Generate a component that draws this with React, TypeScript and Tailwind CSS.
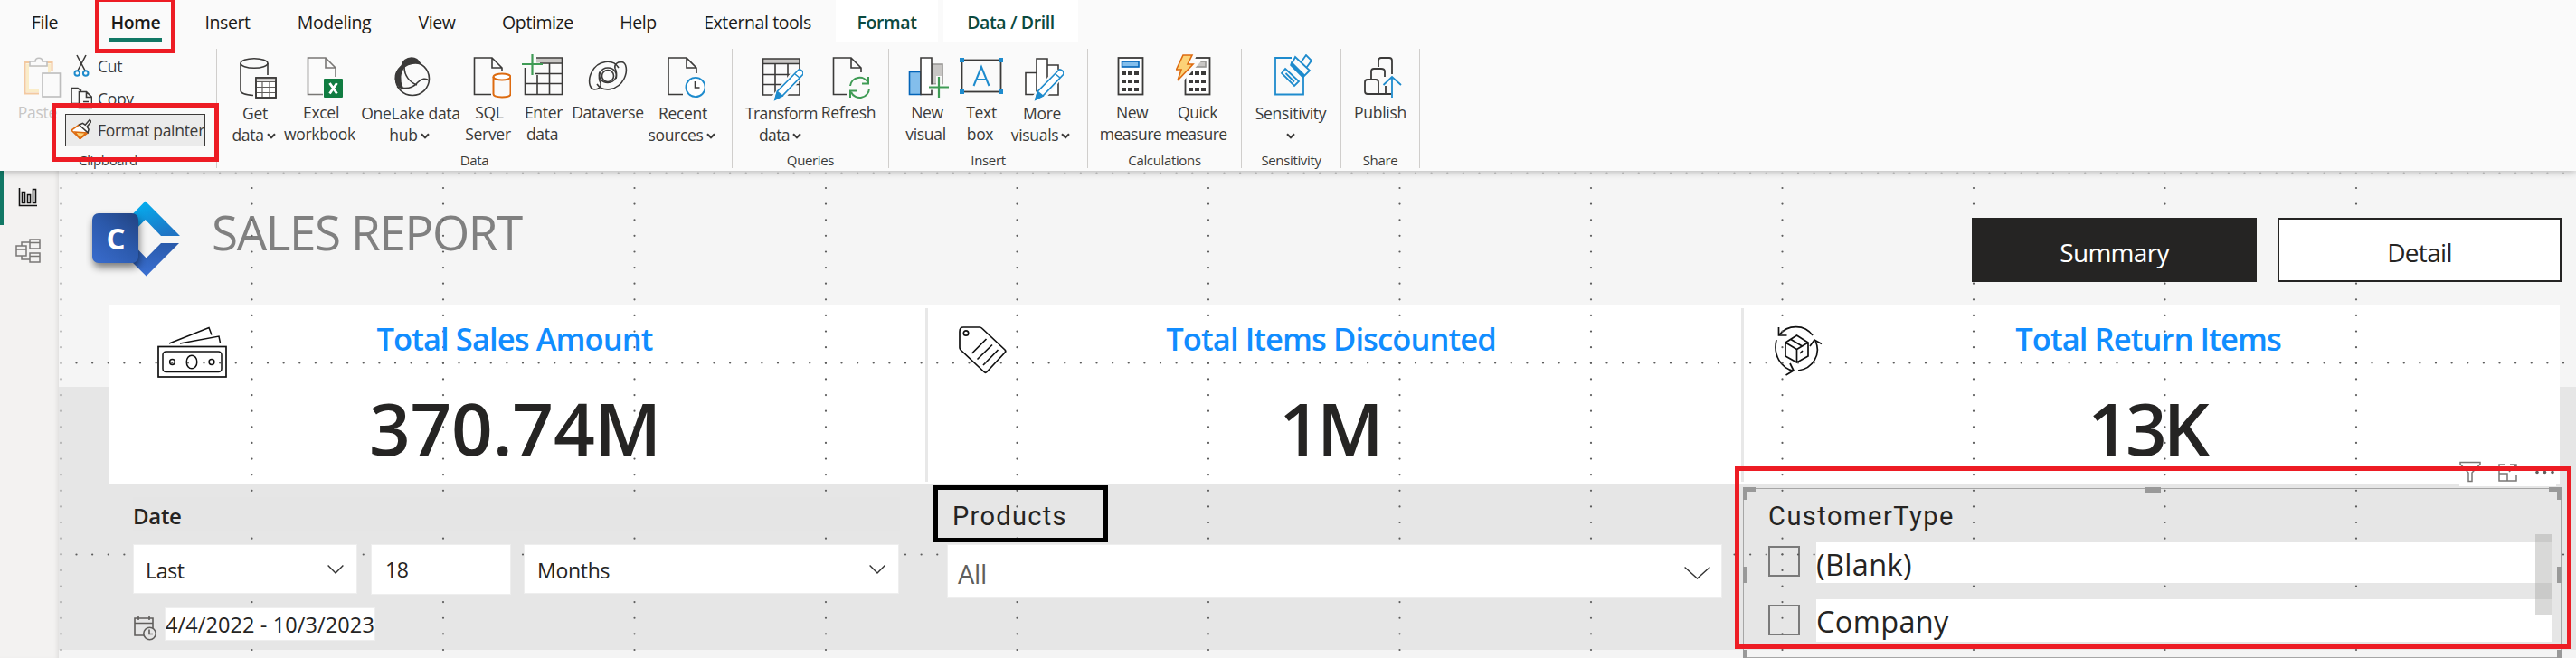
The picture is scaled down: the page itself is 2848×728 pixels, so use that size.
import type { ReactNode } from "react";

const INK = "#3b3a39";
const BLUE = "#1e8bcd";

function Icon({ children }: { children: ReactNode }) {
  return (
    <svg width="48" height="52" viewBox="0 0 48 52" fill="none" stroke={INK} strokeWidth="1.6" className="shrink-0">
      {children}
    </svg>
  );
}

function MiniChevron() {
  return (
    <svg width="10" height="7" viewBox="0 0 10 7" fill="none" stroke={INK} strokeWidth="2.2" className="mb-[2px] ml-[3px] inline-block">
      <path d="M1 1.2 5 5.2 9 1.2" />
    </svg>
  );
}

function Chevron({ className, w, h }: { className: string; w: number; h: number }) {
  return (
    <svg width={w} height={h} viewBox={`0 0 ${w} ${h}`} fill="none" stroke="#333" strokeWidth="1.4" className={className}>
      <path d={`M.6 .6 ${w / 2} ${h - 1} ${w - 0.6} .6`} />
    </svg>
  );
}

const pencil = (
  <>
    <path d="M44 19 18 51" stroke="#fafafa" strokeWidth="13" />
    <path d="M42.5 17.5c2-1.8 7 2 5 5L25 46l-8 4 2.500-9z" fill="#fff" stroke={BLUE} />
    <path d="M19.500 41.500 25 46l-8 4z" fill={BLUE} stroke={BLUE} />
    <path d="m39 22 5 4" stroke={BLUE} />
  </>
);

const GetDataIcon = () => (
  <Icon>
    <ellipse cx="23" cy="10" rx="15" ry="5.300" />
    <path d="M8 10v30c0 3 6 5 14 5.500M38 10v13" />
    <rect x="25" y="26" width="22" height="22" fill="#fff" />
    <path d="M25 28h22" stroke="#c8c6c4" strokeWidth="3" />
    <path d="M25 30.500h22M25 36.500h22M25 42.500h22M32 30v18M40 30v18" stroke="#605e5c" strokeWidth="1.200" />
    <rect x="25" y="26" width="22" height="22" />
  </Icon>
);
const ExcelIcon = () => (
  <Icon>
    <path d="M26 44.500H9.500V4H29l11 11v10M29 4v11h11" stroke="#797775" fill="#fbfbfb" />
    <rect x="27" y="27" width="21" height="21" rx="1" fill="#107c41" stroke="none" />
    <path d="m33.500 32 8 11.500M41.500 32l-8 11.500" stroke="#fff" strokeWidth="2.800" />
  </Icon>
);
const OneLakeIcon = () => (
  <Icon>
    <path d="M14 14C15 7 20 4 25 4s8 3 10 7c-5-2-13-1-18 3-5 6-6 15-2 23-8-1-12-16-1-23z" fill={INK} stroke={INK} />
    <circle cx="26" cy="27" r="18.500" />
    <path d="M17 14c0 10 6 17 14 20M9 36c9 3 17 2 23-5 4-4 9-5 12-2" />
  </Icon>
);
const SqlIcon = () => (
  <Icon>
    <path d="M26 44.500H7.500V4H27l11 11v4M27 4v11h11" />
    <ellipse cx="38" cy="25" rx="9.500" ry="3.500" stroke="#dd6b10" strokeWidth="2" fill="#fff" />
    <path d="M28.500 25v19c0 4.500 19 4.500 19 0V25" stroke="#dd6b10" strokeWidth="2" />
  </Icon>
);
const EnterIcon = () => (
  <Icon>
    <path d="M16 4.500h28v5H16z" fill="#c8c6c4" stroke="none" />
    <path d="M16 4h28.500v40.500h-41V15M20 10h24M44 21.500H14M44 32.500H3M17 23v21M30.500 10v34" />
    <path d="M0 11h23M11.500 0v23" stroke="#3f9b55" strokeWidth="2.200" />
  </Icon>
);
const DataverseIcon = () => (
  <Icon>
    <path d="M36 15C30 5 13 6 6 20 2 28 3 38 9 39c5 0 8-3 7-7-4-8 0-17 8-17 7 0 11 6 9 12" />
    <path d="M12 33c6 9 23 8 30-6 4-8 3-18-3-18.500-5 0-8 3-7 7 4 8 0 16-8 16-7 0-11-6-9-12" />
    <circle cx="24" cy="24" r="6.500" />
  </Icon>
);
const RecentIcon = () => (
  <Icon>
    <path d="M24 44.500H8V4h20l11 11v6M28 4v11h11" />
    <circle cx="38" cy="36.500" r="10.600" stroke={BLUE} fill="#fff" strokeWidth="1.800" />
    <path d="M37.500 30v7h5" />
  </Icon>
);
const TransformIcon = () => (
  <Icon>
    <path d="M3.500 5h40.500v5.500H3.500z" fill="#c8c6c4" />
    <path d="M3.500 10.500V45H44V10.500M3.500 22.500H44M3.500 33.500H44M17 10.500V45M31 10.500V45" />
    {pencil}
  </Icon>
);
const RefreshIcon = () => (
  <Icon>
    <path d="M22 44.500H7.500V4H27l11 11v5M27 4v11h11" />
    <path d="M26 35a10.500 10.500 0 0 1 20-3M46 25v7.500h-7M47 38a10.500 10.500 0 0 1-20 4M26 48v-7.500h7" stroke="#3f9b55" strokeWidth="2" />
  </Icon>
);
const NewVisualIcon = () => (
  <Icon>
    <path d="M4.500 19.500H17v25H4.500z" fill="#83beec" stroke="#0364b8" />
    <path d="M29 11h12v22H29z" fill="#c8c6c4" stroke="#979593" />
    <path d="M17 4h12v40.500H17z" fill="#fff" />
    <path d="M26 36.500h23M37 24v24" stroke="#fafafa" strokeWidth="6" />
    <path d="M26 36.500h22M37 25v23" stroke="#3f9b55" strokeWidth="2.200" />
  </Icon>
);
const TextBoxIcon = () => (
  <Icon>
    <rect x="2.500" y="6.500" width="43" height="35" strokeWidth="1.800" />
    <path d="M0 4h5v5H0zM43 4h5v5h-5zM0 39h5v5H0zM43 39h5v5h-5z" fill={BLUE} stroke="none" />
    <path d="m15.500 35 8.500-21 8.500 21M18.500 28h11" stroke={BLUE} strokeWidth="2" />
  </Icon>
);
const MoreVisualsIcon = () => (
  <Icon>
    <path d="M6 20.500h12v24H6zM18 5h12v39.500H18zM30 12h12v33H30" fill="#fff" />
    {pencil}
  </Icon>
);
const keys = "M12 19h5v4h-5zM19 19h5v4h-5zM26 19h5v4h-5zM12 28h5v4h-5zM19 28h5v4h-5zM26 28h5v4h-5zM12 37h5v4h-5zM19 37h5v4h-5zM26 37h5v4h-5z";
const CalcIcon = () => (
  <Icon>
    <rect x="8.500" y="4" width="27" height="40.500" fill="#fff" strokeWidth="1.800" />
    <rect x="12.500" y="8" width="18.500" height="6" fill="#83beec" stroke="#0364b8" />
    <path d={keys} fill={INK} stroke="none" />
  </Icon>
);
const QuickIcon = () => (
  <Icon>
    <g transform="translate(2 0)">
      <rect x="8.500" y="4" width="27" height="40.500" fill="#fff" strokeWidth="1.800" />
      <rect x="14" y="8" width="17" height="6" fill="#c8c6c4" stroke="#979593" />
      <path d={keys} fill={INK} stroke="none" />
    </g>
    <path d="M8 1h12l-5 10h6L4 30l4-12H1z" fill="#fafafa" stroke="#fafafa" strokeWidth="6" />
    <path d="M8 1h10l-5 10h6L2 29l4-12H0.500z" fill="#fcd277" stroke="#dd6b10" />
  </Icon>
);
const SensitivityIcon = () => (
  <Icon>
    <path d="M25 4H7v40.500h31V24" stroke={BLUE} strokeWidth="1.800" />
    <path d="m25 8 16-8-2 18-6 6z" fill="#fafafa" stroke="none" />
    <path d="m29 3 16 15-7 7-13-14zM36 8l5-7 6 6-5 7" stroke={BLUE} strokeWidth="1.800" />
    <path d="m25 9 14 14-2 2-13-13z" fill={BLUE} stroke={BLUE} />
    <path d="m18 16 15 14-5 5-14-14zM18.500 21l9.500 9.500" stroke={BLUE} strokeWidth="1.800" />
  </Icon>
);
const PublishIcon = () => (
  <Icon>
    <path d="M22 14V7c0-2 1-3 3-3h9c2 0 3 1 3 3v15M14 27v-8c0-2 1-3 3-3h8c2 0 4 1 4 3v6M30 35v9M36 44H22V31c0-2-1-3-3-3h-9c-2 0-3 1-3 3v10c0 2 1 3 3 3h12" strokeWidth="1.800" />
    <path d="M37 48V25M27.500 34 37 25l10 9" stroke={BLUE} strokeWidth="1.800" />
  </Icon>
);

type Cmd = { icon: ReactNode; a: string; b?: string; drop?: boolean; w: string; t?: string };

function Command({ icon, a, b, drop, w, t }: Cmd) {
  return (
    <div className={`flex shrink-0 flex-col items-center ${w}`}>
      {icon}
      <div className={`text-center text-[17.5px] leading-[24px] whitespace-nowrap ${t ?? "tracking-[-0.3px]"} ${drop ? "mt-px" : ""}`}>
        <div>{a}</div>
        {(b !== undefined || drop) && (
          <div className="pr-[3px]">
            {b}
            {drop && <MiniChevron />}
          </div>
        )}
      </div>
    </div>
  );
}

function Group({ name, w, pad, items }: { name: string; w: string; pad: string; items: Cmd[] }) {
  return (
    <section className={`flex h-[132px] shrink-0 flex-col border-r-[1.5px] border-[#d0cecc] ${w}`}>
      <div className={`flex h-[115px] pt-[6px] ${pad}`}>
        {items.map((c) => (
          <Command key={c.a + c.b} {...c} />
        ))}
      </div>
      <div className="text-center text-[15px] leading-[18px] tracking-[-0.35px]">{name}</div>
    </section>
  );
}

const tabs = [
  { n: "File", w: "w-[99px]" },
  { n: "Home", w: "w-[102px]", active: true },
  { n: "Insert", w: "w-[101px]" },
  { n: "Modeling", w: "w-[135px]" },
  { n: "View", w: "w-[92px]" },
  { n: "Optimize", w: "w-[131px]" },
  { n: "Help", w: "w-[91px]" },
  { n: "External tools", w: "w-[173px]" },
];

function Ribbon() {
  return (
    <header className="relative z-30 h-[189px] bg-[#fafafa] text-[#3b3a39] shadow-[0_1px_8px_rgba(0,0,0,0.28)]">
      <nav className="flex h-[54px] text-[19.5px] leading-[50px] tracking-[-0.4px] text-[#1b1a19]">
        {tabs.map((t) => (
          <div key={t.n} className={`flex shrink-0 flex-col items-center whitespace-nowrap ${t.w}`}>
            <span className={t.active ? "h-[42px] font-semibold" : ""}>{t.n}</span>
            {t.active && <span className="h-[5px] w-[58px] bg-[#117865]" />}
          </div>
        ))}
        <div className="h-[47px] w-[113px] bg-white text-center font-semibold text-[#0b4a40]">Format</div>
        <div className="ml-[6px] h-[47px] w-[149px] bg-white text-center font-semibold text-[#0b4a40]">Data / Drill</div>
      </nav>
      <div className="flex">
        <section className="flex h-[132px] w-[240px] shrink-0 flex-col border-r-[1.5px] border-[#d0cecc] text-[17.5px] leading-[24px] tracking-[-0.3px]">
          <div className="flex h-[115px]">
            <div className="flex w-[72px] flex-col items-end pt-[6px] text-[#c8c6c4]">
              <svg width="48" height="52" viewBox="0 0 48 52" fill="none" strokeWidth="1.600" className="mr-[-1px]">
                <path d="M18 43.500H2.500V9h30v10" stroke="#f3c9a0" strokeWidth="2.200" />
                <path d="M18 40.500H5.500V12h24v8" stroke="#faecc8" strokeWidth="3" />
                <path d="M8 13v-5h6c0-5 8-5 8 0h5v5z" stroke="#c0c0c0" fill="#fafafa" />
                <rect x="22" y="21" width="19.500" height="26" fill="#fafafa" stroke="#bdbdbd" />
              </svg>
              <span className="mr-[9px]">Paste</span>
            </div>
            <div className="flex flex-col pt-[6px]">
              <div className="ml-[6px] flex h-[30px] items-start">
                <svg width="24" height="26" viewBox="0 0 24 26" fill="none" stroke={INK} strokeWidth="1.600">
                  <path d="m7 1 9 17M17 1 8 18" />
                  <circle cx="7.300" cy="21" r="2.800" stroke={BLUE} strokeWidth="2" />
                  <circle cx="16.700" cy="21" r="2.800" stroke={BLUE} strokeWidth="2" />
                </svg>
                <span className="ml-[6px] pt-px">Cut</span>
              </div>
              <div className="ml-[6px] flex h-[36px] items-start pt-[6px]">
                <svg width="24" height="26" viewBox="0 0 24 26" fill="none" stroke={INK} strokeWidth="1.600">
                  <path d="M9 18.500H1V1.500h7l4 3M9.500 5.500h8l6 6v12h-14zM17.500 5.500v6h6M14 16.500h6" />
                </svg>
                <span className="ml-[6px] pt-px">Copy</span>
              </div>
              <div className="flex h-[36px] w-[155px] items-center border border-[#3b3a39] bg-[#ebebeb] pl-[5px]">
                <svg width="24" height="26" viewBox="0 0 24 26" fill="none" stroke={INK} strokeWidth="1.600">
                  <path d="m11 6 9 10-9 7L1 13z" fill="#fff" stroke="#dd6b10" />
                  <path d="m5 15 13 1-7 7z" fill="#fcd277" stroke="#dd6b10" />
                  <path d="m10 7 4-2 3 2 5-6 2 2-5 6 2 3-1 4z" fill="#fafafa" />
                </svg>
                <span className="ml-[7px] whitespace-nowrap">Format painter</span>
              </div>
            </div>
          </div>
          <div className="text-center text-[15px] leading-[18px] tracking-[-0.35px]">Clipboard</div>
        </section>
        <Group
          name="Data"
          w="w-[570px]"
          pad="pl-[12px]"
          items={[
            { icon: <GetDataIcon />, a: "Get", b: "data", drop: true, w: "w-[60px]" },
            { icon: <ExcelIcon />, a: "Excel", b: "workbook", w: "w-[86px]" },
            { icon: <OneLakeIcon />, a: "OneLake data", b: "hub", drop: true, w: "w-[112px]" },
            { icon: <SqlIcon />, a: "SQL", b: "Server", w: "w-[62px]" },
            { icon: <EnterIcon />, a: "Enter", b: "data", w: "w-[58px]" },
            { icon: <DataverseIcon />, a: "Dataverse", w: "w-[84px]" },
            { icon: <RecentIcon />, a: "Recent", b: "sources", drop: true, w: "w-[82px]" },
          ]}
        />
        <Group
          name="Queries"
          w="w-[173px]"
          pad="pl-[12px]"
          items={[
            { icon: <TransformIcon />, a: "Transform", b: "data", drop: true, w: "w-[84px]", t: "tracking-[-0.6px]" },
            { icon: <RefreshIcon />, a: "Refresh", w: "w-[64px]" },
          ]}
        />
        <Group
          name="Insert"
          w="w-[220px]"
          pad="pl-[12px]"
          items={[
            { icon: <NewVisualIcon />, a: "New", b: "visual", w: "w-[60px]" },
            { icon: <TextBoxIcon />, a: "Text", b: "box", w: "w-[60px]" },
            { icon: <MoreVisualsIcon />, a: "More", b: "visuals", drop: true, w: "w-[74px]" },
          ]}
        />
        <Group
          name="Calculations"
          w="w-[170px]"
          pad="pl-[12px]"
          items={[
            { icon: <CalcIcon />, a: "New", b: "measure", w: "w-[73px]", t: "tracking-[-0.5px]" },
            { icon: <QuickIcon />, a: "Quick", b: "measure", w: "w-[72px]", t: "tracking-[-0.5px]" },
          ]}
        />
        <Group name="Sensitivity" w="w-[110px]" pad="pl-[9px]" items={[{ icon: <SensitivityIcon />, a: "Sensitivity", drop: true, w: "w-[90px]" }]} />
        <Group name="Share" w="w-[87px]" pad="pl-[8px]" items={[{ icon: <PublishIcon />, a: "Publish", w: "w-[70px]" }]} />
      </div>
    </header>
  );
}

function Rail() {
  return (
    <aside className="relative z-20 flex w-[65px] shrink-0 flex-col bg-[#f3f2f1] shadow-[inset_-4px_0_4px_-2px_rgba(0,0,0,0.08)]">
      <div className="flex h-[60px] border-l-4 border-[#117865] pt-[19px] pl-[16px]">
        <svg width="22" height="22" viewBox="0 0 22 22" fill="none" stroke="#111" strokeWidth="1.600">
          <path d="M1.500 0v19.500H21M4.500 4.500h3V16.500h-3zM10.500 7.500h3v9h-3zM16.500 1.500h3v15h-3z" />
        </svg>
      </div>
      <svg width="30" height="30" viewBox="0 0 30 30" fill="none" stroke="#797775" strokeWidth="1.500" className="mt-[14px] ml-[16px]">
        <path d="M2 9h11v11H2zM2 13h11M17 2h11v10H17zM17 5.500h11M17 17h11v10H17zM17 20.500h11M8 9V5h9M8 20v4h9" />
      </svg>
    </aside>
  );
}

function GuideDots() {
  const cols = Array.from({ length: 13 }, (_, i) => 2 + i * 211.5);
  const sideRows = Array.from({ length: 30 }, (_, i) => 19 + i * 17.62);
  const xs = Array.from({ length: 157 }, (_, i) => 19.5 + i * 17.625);
  return (
    <svg width="2783" height="539" viewBox="0 0 2783 539" fill="#5c5c5c" className="pointer-events-none absolute inset-0 z-10">
      {cols.map((x, c) => sideRows.map((y) => <circle key={`${x}-${y}`} cx={x} cy={y} r="1.1" opacity={c === 0 ? 0.35 : 1} />))}
      {xs.map((x) => (
        <g key={x}>
          <circle cx={x} cy="2.500" r="1.100" opacity="0.3" />
          <circle cx={x} cy="212.500" r="1.100" />
          <circle cx={x} cy="424.500" r="1.100" />
        </g>
      ))}
    </svg>
  );
}

function Logo() {
  return (
    <svg width="110" height="110" viewBox="0 0 110 110" className="mt-[26px] ml-[30px] shrink-0">
      <defs>
        <linearGradient id="top" x1="0" y1="0" x2="0.500" y2="1">
          <stop offset="0" stopColor="#00b7f5" />
          <stop offset="1" stopColor="#1f74c4" />
        </linearGradient>
        <linearGradient id="bottom" x1="0.600" y1="0" x2="0.400" y2="1">
          <stop offset="0" stopColor="#2656a5" />
          <stop offset="1" stopColor="#3b70d2" />
        </linearGradient>
        <linearGradient id="tile" x1="1" y1="0" x2="0.200" y2="1">
          <stop offset="0" stopColor="#22427f" />
          <stop offset="0.500" stopColor="#2b59ab" />
          <stop offset="1" stopColor="#3769c8" />
        </linearGradient>
        <filter id="soft" x="-30%" y="-30%" width="160%" height="170%">
          <feGaussianBlur stdDeviation="4" />
        </filter>
      </defs>
      <path d="M50 23.500 65.700 7.500 104 46H83L65.700 28 44 50z" fill="url(#top)" />
      <path d="M44 47 66.700 70.500 83 54h20L66.700 90.500 50 74z" fill="url(#bottom)" />
      <rect x="8" y="26" width="51" height="55" rx="7" fill="#000" opacity="0.5" filter="url(#soft)" />
      <rect x="7" y="21" width="51" height="55" rx="7" fill="url(#tile)" />
      <text x="33" y="60.500" textAnchor="middle" fill="#fff" fontFamily="Open Sans, sans-serif" fontWeight="700" fontSize="33">
        C
      </text>
    </svg>
  );
}

const MoneyIcon = () => (
  <svg width="80" height="62" viewBox="0 0 80 62" fill="none" stroke="#111" strokeWidth="1.500">
    <path d="M13 20 57 2.500l3 8M25 20l43-8 1.500 7.500" />
    <rect x="1" y="23.500" width="75" height="33.500" strokeWidth="1.700" />
    <rect x="6" y="29" width="65" height="22.500" rx="3.500" />
    <ellipse cx="38" cy="40.500" rx="5.800" ry="7.300" />
    <circle cx="16.500" cy="40.500" r="2.900" />
    <circle cx="60" cy="40.500" r="2.900" />
  </svg>
);
const TagIcon = () => (
  <svg width="80" height="62" viewBox="0 0 80 62" fill="none" stroke="#111" strokeWidth="1.700">
    <path d="M5 2h18c1 0 2 .500 3 1.500L51 27c1 1 1 2 0 3L31 51.500c-1 1-2 1-3 0L2 27C1.300 26 1 25.500 1 24.500V7c0-3 1.500-5 4-5z" />
    <circle cx="8" cy="8.500" r="2.700" />
    <path d="m14.500 31 16-16M20.500 37.500 37 21.500M27 44l16.500-17" />
  </svg>
);
const ReturnIcon = () => (
  <svg width="80" height="62" viewBox="0 0 80 62" fill="none" stroke="#111" strokeWidth="1.700">
    <path d="M4.500 2v9h9M5 10.500C14-1 33-2 42 11M2 16c-4 17 5 31 19 34.500M12.500 55l8.500-5-4-8M26 50c16-2 26-18 19-33M39 23l5-7 8 4.500" />
    <path d="M12 19 24.500 11 37 19v15L24.500 41 12 34zM12 19l12.500 7.500L37 19M24.500 26.500V41M18 15.500l12.500 7.500M28 31l3-3" />
  </svg>
);

function Kpi({ icon, title, value, w, pad, divider, vw }: { icon: ReactNode; title: string; value: string; w: string; pad: string; divider?: boolean; vw: string }) {
  return (
    <article className={`relative flex h-full shrink-0 flex-col bg-white ${w}`}>
      {divider && <span className="absolute top-[3px] left-0 h-[192px] w-[3px] bg-[#e8e8e8]" />}
      <div className={`absolute top-[22px] ${pad}`}>{icon}</div>
      <h2 className="relative z-20 mt-[12px] pr-[5px] text-center text-[34.5px] leading-[50px] font-semibold tracking-[-0.9px] text-[#118dff]">{title}</h2>
      <p className={`relative z-20 mt-[3px] text-center text-[80px] leading-[140px] font-semibold text-[#252423] ${vw}`}>{value}</p>
    </article>
  );
}

function DateSlicer() {
  const box = "relative flex shrink-0 items-center bg-white outline outline-[1.5px] outline-[#eeeeee] text-[23px]";
  return (
    <section className="ml-[82px] w-[848px] shrink-0 pt-[14px] text-[#252423]">
      <h3 className="relative z-20 h-[38px] bg-[#e5e5e5] text-[24px] leading-[41px] font-semibold tracking-[-0.3px]">Date</h3>
      <div className="relative z-20 mt-[15px] flex items-start pl-px tracking-[-0.3px]">
        <div className={`${box} h-[53px] w-[246px] justify-between pr-[14px] pl-[13px]`}>
          <span className="pt-[4px]">Last</span>
          <Chevron className="" w={18} h={10} />
        </div>
        <div className={`${box} ml-[17px] h-[54px] w-[153px] pt-px pl-[15px]`}>18</div>
        <div className={`${box} ml-[16px] h-[53px] w-[413px] justify-between pr-[14px] pl-[14px]`}>
          <span className="pt-[4px]">Months</span>
          <Chevron className="" w={18} h={10} />
        </div>
      </div>
      <div className="relative z-20 mt-[16px] flex items-start">
        <svg width="28" height="28" viewBox="0 0 28 28" fill="none" stroke="#605e5c" strokeWidth="1.600" className="mt-[8px]">
          <path d="M13 22H2V3h20v11M2 8.500h20M6 0v5M18 0v5" />
          <circle cx="18.500" cy="20" r="6.700" fill="#e6e6e6" />
          <path d="M18 15.500v5h4" />
        </svg>
        <span className="ml-[8px] h-[35px] w-[231px] bg-white text-[23.5px] leading-[37px] tracking-[0.1px] whitespace-nowrap outline outline-[#eeeeee]">4/4/2022 - 10/3/2023</span>
      </div>
    </section>
  );
}

function ProductSlicer() {
  return (
    <section className="ml-[53px] w-[855px] shrink-0 text-[#252423]">
      <h3 className="relative z-20 h-[67px] pt-[15px] pl-[5px] font-['Roboto',sans-serif] text-[29px] leading-[40px] tracking-[1.3px]">Products</h3>
      <div className="relative z-20 flex h-[58px] items-center justify-between bg-white pr-[12px] pl-[11px] text-[29px] tracking-[-0.3px] text-[#605e5c] outline outline-[#eeeeee]">
        <span className="pt-[5px]">All</span>
        <Chevron className="mt-[3px]" w={29} h={14} />
      </div>
    </section>
  );
}

function CustomerSlicer() {
  return (
    <section className="relative ml-[24px] h-[188px] w-[905px] shrink-0 text-[#252423]">
      <div className="pointer-events-none absolute top-[4px] left-0 h-[188px] w-[905px] border-[1.5px] border-[#a6a6a6]" />
      <span className="absolute top-[3px] left-0 size-[14px] border-t-[5px] border-l-[5px] border-[#999]" />
      <span className="absolute top-[3px] right-0 size-[14px] border-t-[5px] border-r-[5px] border-[#999]" />
      <span className="absolute top-[3px] left-[444px] h-[6px] w-[18px] bg-[#999]" />
      <span className="absolute top-[91px] left-0 h-[18px] w-[5px] bg-[#999]" />
      <span className="absolute top-[91px] right-0 h-[18px] w-[5px] bg-[#999]" />
      <span className="absolute top-[183px] left-0 h-[10px] w-[5px] bg-[#999]" />
      <span className="absolute top-[183px] right-0 h-[10px] w-[5px] bg-[#999]" />
      <h3 className="relative z-20 mt-[15px] ml-[28px] h-[40px] w-[220px] bg-[#e6e6e6] font-['Roboto',sans-serif] text-[29px] leading-[40px] tracking-[1.5px]">CustomerType</h3>
      {["(Blank)", "Company"].map((label, i) => (
        <div key={label} className={`ml-[28px] flex items-start ${i === 0 ? "mt-[9px]" : "mt-[18px]"}`}>
          <span className={`h-[34px] w-[35px] border-2 border-[#7a7a7a] ${i === 0 ? "mt-[4px]" : "mt-[6px]"}`} />
          <span className={`relative z-20 ml-[18px] w-[813px] bg-white text-[32.5px] leading-[49px] tracking-[0.35px] ${i === 0 ? "h-[45px]" : "h-[47px]"}`}>{label}</span>
        </div>
      ))}
      <span className="absolute top-[55px] right-[11px] z-20 h-[89px] w-[18px] bg-[#a19f9d]/40" />
      <div className="absolute top-[-26px] right-[6px] z-20 flex h-[28px] items-start gap-[19px] bg-white">
        <svg width="24" height="24" viewBox="0 0 24 24" fill="none" stroke="#797775" strokeWidth="1.500">
          <path d="M1 1.500h22v2L14 13v9.500h-4V13L1 3.500z" />
        </svg>
        <svg width="21" height="24" viewBox="0 0 21 24" fill="none" stroke="#797775" strokeWidth="1.500">
          <path d="M8 4H1v18h19v-7M1 14h9v8M13 4h7v7M20 4l-8 8" />
        </svg>
        <svg width="24" height="24" viewBox="0 0 24 24" fill="#605e5c">
          <circle cx="3" cy="12.500" r="1.800" />
          <circle cx="11.500" cy="12.500" r="1.800" />
          <circle cx="20" cy="12.500" r="1.800" />
        </svg>
      </div>
    </section>
  );
}

export default function App() {
  return (
    <div className="relative flex h-[728px] w-[2848px] flex-col overflow-hidden bg-[#f5f5f5] font-['Open_Sans','Noto_Sans',sans-serif]">
      <Ribbon />
      <div className="flex flex-1">
        <Rail />
        <main className="relative flex h-[539px] w-[2783px] shrink-0 flex-col bg-[linear-gradient(#f5f5f5_239px,#e6e6e6_239px,#e6e6e6_530px,#f4f4f4_530px)]">
          <GuideDots />
          <div className="flex h-[149px] shrink-0">
            <Logo />
            <h1 className="mt-[36px] ml-[29px] text-[53px] leading-[64px] tracking-[-1.4px] whitespace-nowrap text-[#808080]">SALES REPORT</h1>
            <div className="relative z-20 mt-[52px] mr-[16px] ml-auto flex h-[71px] gap-[23px] text-[28px] leading-[76px] tracking-[-0.7px]">
              <button className="w-[315px] bg-[#252423] text-center text-white">Summary</button>
              <button className="w-[314px] border-2 border-[#252423] bg-white text-center leading-[72px] text-[#252423]">Detail</button>
            </div>
          </div>
          <div className="flex h-[198px] shrink-0 pl-[55px]">
            <Kpi icon={<MoneyIcon />} title="Total Sales Amount" value="370.74M" w="w-[903px]" pad="left-[54px]" vw="tracking-[-0.2px] pr-[4px]" />
            <Kpi icon={<TagIcon />} title="Total Items Discounted" value="1M" w="w-[902px]" pad="left-[37px]" divider vw="tracking-[-4px] pr-[8px]" />
            <Kpi icon={<ReturnIcon />} title="Total Return Items" value="13K" w="w-[905px]" pad="left-[37px]" divider vw="tracking-[-4px] pr-[8px]" />
          </div>
          <div className="flex h-[192px] shrink-0">
            <DateSlicer />
            <ProductSlicer />
            <CustomerSlicer />
          </div>
        </main>
      </div>
      <div className="pointer-events-none absolute top-[-3px] left-[105px] z-40 h-[62px] w-[89px] border-[5px] border-[#ed1c24]" />
      <div className="pointer-events-none absolute top-[114px] left-[57px] z-40 h-[65px] w-[185px] border-[5px] border-[#ed1c24]" />
      <div className="pointer-events-none absolute top-[537px] left-[1032px] z-40 h-[63px] w-[193px] border-[5px] border-black" />
      <div className="pointer-events-none absolute top-[516px] left-[1918px] z-40 h-[202px] w-[925px] border-[5px] border-[#ed1c24]" />
    </div>
  );
}
